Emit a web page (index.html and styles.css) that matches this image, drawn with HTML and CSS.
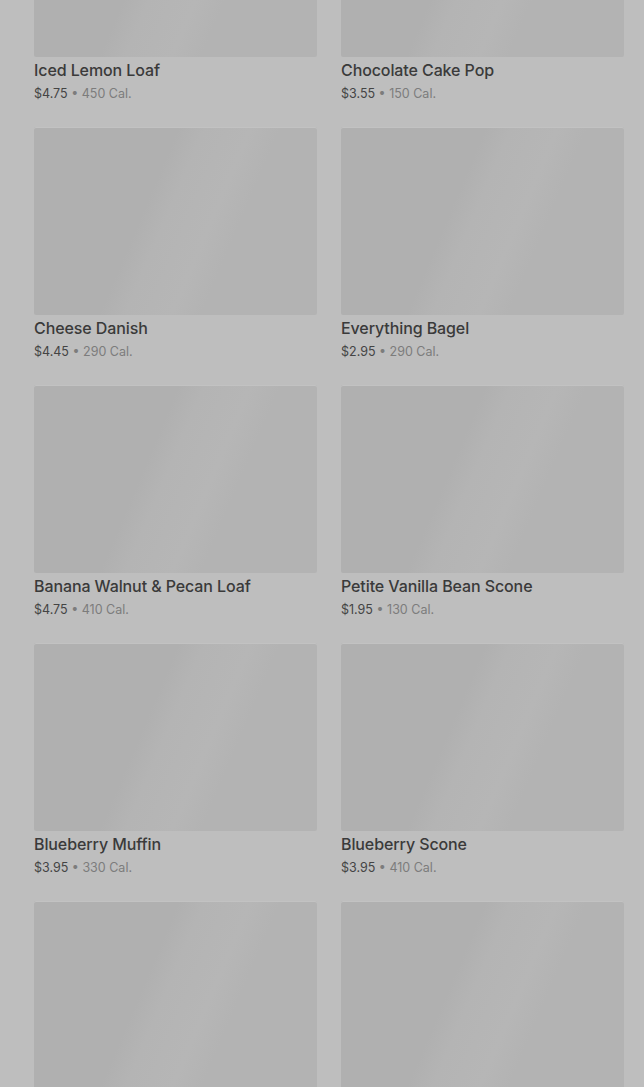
FILE: index.html
```html
<!DOCTYPE html>
<html lang="en">
<head>
    <meta charset="UTF-8">
    <title>Bakery</title>
    <link rel="stylesheet" href="styles.css">
</head>
<body>
    <main class="menu">
        <div class="card">
            <div class="thumb"></div>
            <h3 class="name">Iced Lemon Loaf</h3>
            <p class="meta"><span class="price">$4.75</span> • 450 Cal.</p>
        </div>
        <div class="card">
            <div class="thumb"></div>
            <h3 class="name">Chocolate Cake Pop</h3>
            <p class="meta"><span class="price">$3.55</span> • 150 Cal.</p>
        </div>
        <div class="card">
            <div class="thumb"></div>
            <h3 class="name">Cheese Danish</h3>
            <p class="meta"><span class="price">$4.45</span> • 290 Cal.</p>
        </div>
        <div class="card">
            <div class="thumb"></div>
            <h3 class="name">Everything Bagel</h3>
            <p class="meta"><span class="price">$2.95</span> • 290 Cal.</p>
        </div>
        <div class="card">
            <div class="thumb"></div>
            <h3 class="name">Banana Walnut &amp; Pecan Loaf</h3>
            <p class="meta"><span class="price">$4.75</span> • 410 Cal.</p>
        </div>
        <div class="card">
            <div class="thumb"></div>
            <h3 class="name">Petite Vanilla Bean Scone</h3>
            <p class="meta"><span class="price">$1.95</span> • 130 Cal.</p>
        </div>
        <div class="card">
            <div class="thumb"></div>
            <h3 class="name">Blueberry Muffin</h3>
            <p class="meta"><span class="price">$3.95</span> • 330 Cal.</p>
        </div>
        <div class="card">
            <div class="thumb"></div>
            <h3 class="name">Blueberry Scone</h3>
            <p class="meta"><span class="price">$3.95</span> • 410 Cal.</p>
        </div>
        <div class="card">
            <div class="thumb"></div>
        </div>
        <div class="card">
            <div class="thumb"></div>
        </div>
    </main>
</body>
</html>
```

FILE: styles.css
```css
html, body {
    margin: 0;
    height: 1087px;
    overflow: hidden;
    background: #bebebe;
    font-family: Inter, "Noto Sans", sans-serif;
}

.menu {
    display: grid;
    grid-template-columns: 283px 283px;
    column-gap: 24px;
    row-gap: 24px;
    margin-top: -131px;
    padding: 0 20px 0 34px;
}

.thumb {
    height: 188px;
    border-radius: 2px;
    background: linear-gradient(113deg, #b0b0b0 0%, #b0b0b0 40%, #b4b4b4 47%, #b6b6b6 60%, #b3b3b3 68%, #b3b3b3 100%);
    box-shadow: inset 0 1px 0 #c2c2c2;
}

.name {
    margin: 0;
    padding-top: 1px;
    font-size: 16px;
    font-weight: 500;
    line-height: 25px;
    letter-spacing: -0.1px;
    color: #3a3a3a;
}

.meta {
    margin: 0;
    padding-top: 1px;
    font-size: 12.5px;
    line-height: 19px;
    color: #7c7c7c;
}

.price {
    color: #444;
}
```
